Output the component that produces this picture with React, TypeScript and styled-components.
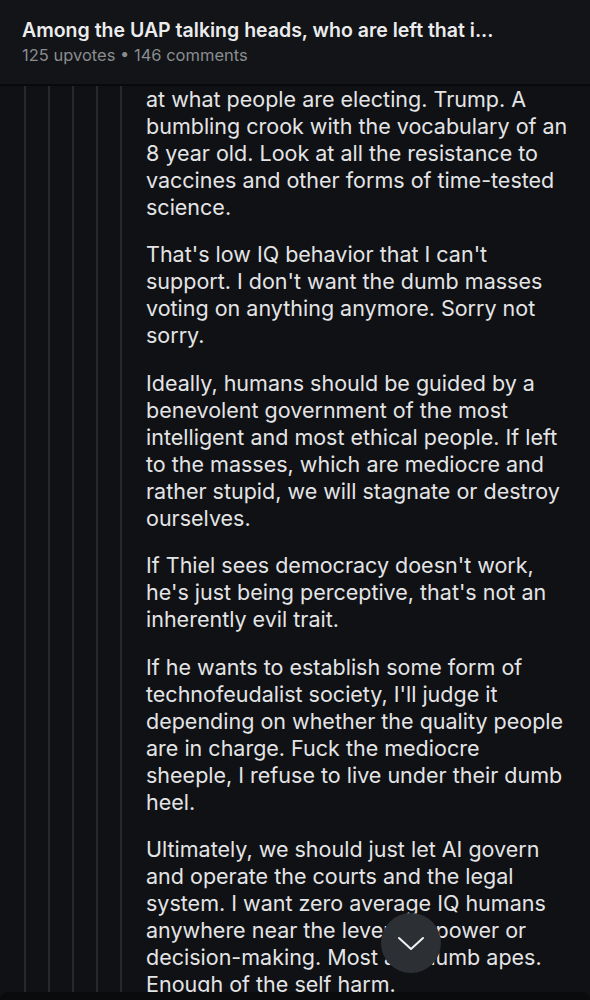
import styled, { createGlobalStyle } from "styled-components"

const GlobalStyle = createGlobalStyle`
  html, body {
    margin: 0;
    padding: 0;
    background: #0f1114;
  }
  body {
    font-family: Inter, "Liberation Sans", sans-serif;
    -webkit-font-smoothing: antialiased;
  }
`

const Screen = styled.div`
  position: relative;
  display: flex;
  flex-direction: column;
  width: 590px;
  height: 1000px;
  overflow: hidden;
  background: #0f1114;
`

const Header = styled.header`
  display: flex;
  flex-direction: column;
  gap: 2px;
  height: 86px;
  box-sizing: border-box;
  padding: 18px 22px 0;
  background: #121417;
  border-bottom: 2px solid #08090b;
`

const Title = styled.h1`
  margin: 0;
  font-size: 19.5px;
  line-height: 24px;
  font-weight: 600;
  color: #ececee;
  white-space: nowrap;
`

const Meta = styled.div`
  font-size: 16.5px;
  line-height: 22px;
  color: #8a8c90;
`

const Body = styled.div`
  flex: 1;
  display: flex;
  min-height: 0;
  overflow: hidden;
`

const Rail = styled.div`
  display: flex;
  padding-left: 24px;
`

const RailLine = styled.div`
  width: 24px;
  border-left: 2px solid #26282c;
  box-sizing: border-box;
`

const Comment = styled.div`
  flex: 1;
  padding-left: 2px;
  color: #e4e4e6;
  font-size: 21.5px;
  line-height: 27px;
`

const Paragraph = styled.p`
  margin: 0 0 20.4px;
  white-space: nowrap;
`

const BottomSheet = styled.div`
  height: 8px;
  background: #0a0b0d;
  border-radius: 14px 14px 0 0;
`

const ScrollButton = styled.button`
  position: absolute;
  left: 381px;
  top: 913px;
  width: 60px;
  height: 60px;
  border: none;
  border-radius: 50%;
  background: #2c2f33;
  display: flex;
  align-items: center;
  justify-content: center;
  padding: 0;
`

const paragraphs: string[][] = [
  [
    "at what people are electing. Trump. A",
    "bumbling crook with the vocabulary of an",
    "8 year old. Look at all the resistance to",
    "vaccines and other forms of time-tested",
    "science.",
  ],
  [
    "That's low IQ behavior that I can't",
    "support. I don't want the dumb masses",
    "voting on anything anymore. Sorry not",
    "sorry.",
  ],
  [
    "Ideally, humans should be guided by a",
    "benevolent government of the most",
    "intelligent and most ethical people. If left",
    "to the masses, which are mediocre and",
    "rather stupid, we will stagnate or destroy",
    "ourselves.",
  ],
  [
    "If Thiel sees democracy doesn't work,",
    "he's just being perceptive, that's not an",
    "inherently evil trait.",
  ],
  [
    "If he wants to establish some form of",
    "technofeudalist society, I'll judge it",
    "depending on whether the quality people",
    "are in charge. Fuck the mediocre",
    "sheeple, I refuse to live under their dumb",
    "heel.",
  ],
  [
    "Ultimately, we should just let AI govern",
    "and operate the courts and the legal",
    "system. I want zero average IQ humans",
    "anywhere near the levers of power or",
    "decision-making. Most are dumb apes.",
    "Enough of the self harm.",
  ],
]

function ChevronDown() {
  return (
    <svg width="28" height="15" viewBox="0 0 28 15" fill="none">
      <path
        d="M2 2 L14 13 L26 2"
        stroke="#f2f2f2"
        strokeWidth="2"
        strokeLinecap="round"
        strokeLinejoin="round"
      />
    </svg>
  )
}

export default function App() {
  return (
    <>
      <GlobalStyle />
      <Screen>
        <Header>
          <Title>Among the UAP talking heads, who are left that i...</Title>
          <Meta>125 upvotes • 146 comments</Meta>
        </Header>
        <Body>
          <Rail>
            {[0, 1, 2, 3, 4].map((i) => (
              <RailLine key={i} />
            ))}
          </Rail>
          <Comment>
            {paragraphs.map((lines, i) => (
              <Paragraph key={i}>
                {lines.map((line, j) => (
                  <span key={j}>
                    {line}
                    {j < lines.length - 1 && <br />}
                  </span>
                ))}
              </Paragraph>
            ))}
          </Comment>
        </Body>
        <BottomSheet />
        <ScrollButton type="button" aria-label="Next comment">
          <ChevronDown />
        </ScrollButton>
      </Screen>
    </>
  )
}
